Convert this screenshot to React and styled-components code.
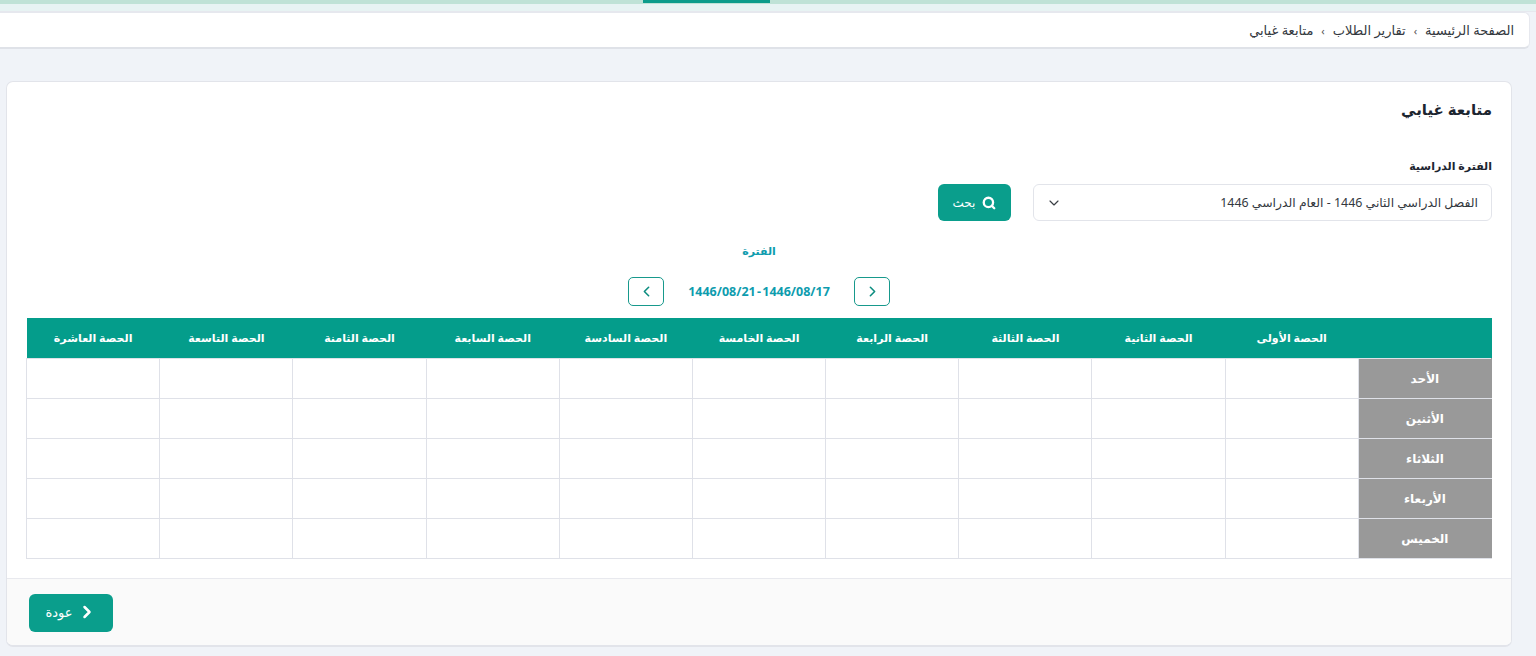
import React from "react";
import styled, { createGlobalStyle } from "styled-components";
import { ChevronDown, ChevronLeft, ChevronRight, Search } from "lucide-react";

const periods = [
  "الحصة الأولى",
  "الحصة الثانية",
  "الحصة الثالثة",
  "الحصة الرابعة",
  "الحصة الخامسة",
  "الحصة السادسة",
  "الحصة السابعة",
  "الحصة الثامنة",
  "الحصة التاسعة",
  "الحصة العاشرة",
];

const days = ["الأحد", "الأثنين", "الثلاثاء", "الأربعاء", "الخميس"];

const crumbs = ["الصفحة الرئيسية", "تقارير الطلاب", "متابعة غيابي"];

const App = () => {
  return (
    <>
      <GlobalStyle />
      <Page dir="rtl">
        <TopBar>
          <ActiveTab />
        </TopBar>
        <Breadcrumb>
          {crumbs.map((crumb, i) => (
            <React.Fragment key={crumb}>
              {i > 0 && <CrumbSep>›</CrumbSep>}
              <span>{crumb}</span>
            </React.Fragment>
          ))}
        </Breadcrumb>
        <Card>
          <CardBody>
            <Title>متابعة غيابي</Title>
            <FieldLabel>الفترة الدراسية</FieldLabel>
            <SearchRow>
              <Select>
                <span>الفصل الدراسي الثاني 1446 - العام الدراسي 1446</span>
                <ChevronDown size={16} strokeWidth={1.75} color="#3a3f45" />
              </Select>
              <SearchButton type="button">
                <Search size={14} strokeWidth={4} />
                بحث
              </SearchButton>
            </SearchRow>
            <PeriodTitle>الفترة</PeriodTitle>
            <Pager>
              <PagerButton type="button">
                <ChevronRight size={17} strokeWidth={2.25} />
              </PagerButton>
              <DateRange>1446/08/17 - 1446/08/21</DateRange>
              <PagerButton type="button">
                <ChevronLeft size={17} strokeWidth={2.25} />
              </PagerButton>
            </Pager>
            <Schedule>
              <thead>
                <tr>
                  <HeadCell />
                  {periods.map((p) => (
                    <HeadCell key={p}>{p}</HeadCell>
                  ))}
                </tr>
              </thead>
              <tbody>
                {days.map((day) => (
                  <tr key={day}>
                    <DayCell>{day}</DayCell>
                    {periods.map((p) => (
                      <Cell key={p} />
                    ))}
                  </tr>
                ))}
              </tbody>
            </Schedule>
          </CardBody>
          <CardFooter>
            <BackButton type="button">
              <ChevronRight size={20} strokeWidth={3} />
              عودة
            </BackButton>
          </CardFooter>
        </Card>
      </Page>
    </>
  );
};

const GlobalStyle = createGlobalStyle`
  html, body {
    margin: 0;
    padding: 0;
    background: #f0f3f8;
    overflow: hidden;
  }
  * {
    box-sizing: border-box;
  }
  body {
    font-family: "Noto Sans", "DejaVu Sans", sans-serif;
    color: #212830;
  }
`;

const Page = styled.div`
  width: 1536px;
  height: 656px;
  overflow: hidden;
  background: #f0f3f8;
`;

const TopBar = styled.div`
  height: 12px;
  background: linear-gradient(#bfe2d6 0 4px, #e7f3f3 4px 11px, #e6e8ee 11px);
`;

const ActiveTab = styled.div`
  width: 127px;
  height: 3px;
  background: #0d9c8b;
  margin-right: 766px;
`;

const Breadcrumb = styled.nav`
  height: 37px;
  margin: 0 6px 0 -10px;
  padding: 0 15px;
  display: flex;
  align-items: center;
  gap: 8px;
  background: #fff;
  border: 1px solid #e6e8ee;
  border-bottom: 2px solid #dfe2e8;
  border-radius: 6px;
  font-size: 13px;
  color: #33383e;
`;

const CrumbSep = styled.span`
  font-size: 11px;
  color: #555;
`;

const Card = styled.main`
  width: 1506px;
  height: 566px;
  margin: 32px 24px 0 0;
  display: flex;
  flex-direction: column;
  background: #fff;
  border: 1px solid #e2e4ea;
  border-bottom-width: 2px;
  border-radius: 7px;
  overflow: hidden;
`;

const CardBody = styled.div`
  flex: 1;
  padding: 0 19px;
`;

const Title = styled.h1`
  margin: 15px 0 0;
  height: 24px;
  line-height: 24px;
  font-size: 15px;
  font-weight: 700;
  color: #1c2530;
`;

const FieldLabel = styled.div`
  margin-top: 35px;
  height: 20px;
  line-height: 20px;
  font-size: 11px;
  font-weight: 700;
  color: #1c2530;
`;

const SearchRow = styled.div`
  display: flex;
  gap: 22px;
  margin-top: 8px;
`;

const Select = styled.div`
  width: 459px;
  height: 37px;
  padding: 0 13px 0 12px;
  display: flex;
  align-items: center;
  justify-content: space-between;
  background: #fff;
  border: 1px solid #e2e4ea;
  border-radius: 6px;
  font-size: 12.4px;
  color: #33383e;
`;

const SearchButton = styled.button`
  width: 73px;
  height: 37px;
  display: flex;
  align-items: center;
  justify-content: center;
  gap: 7px;
  padding: 0;
  border: none;
  border-radius: 6px;
  background: #0a9e8c;
  color: #fff;
  font: inherit;
  font-size: 12px;
`;

const PeriodTitle = styled.div`
  margin-top: 20px;
  height: 20px;
  line-height: 20px;
  text-align: center;
  font-size: 11px;
  font-weight: 700;
  color: #0e9cae;
`;

const Pager = styled.div`
  display: flex;
  justify-content: center;
  align-items: center;
  gap: 22px;
  margin-top: 16px;
`;

const PagerButton = styled.button`
  width: 36px;
  height: 29px;
  display: flex;
  align-items: center;
  justify-content: center;
  padding: 0;
  background: #fff;
  border: 1px solid #17998c;
  border-radius: 5px;
  color: #0d8d80;
`;

const DateRange = styled.div`
  width: 146px;
  text-align: center;
  white-space: nowrap;
  font-size: 12.5px;
  font-weight: 700;
  word-spacing: -2px;
  color: #0e9cae;
`;

const Schedule = styled.table`
  width: 1466px;
  margin-top: 12px;
  border-collapse: collapse;
  table-layout: fixed;
`;

const HeadCell = styled.th`
  height: 40px;
  padding: 0;
  background: #049d8b;
  color: #fff;
  font-size: 11px;
  font-weight: 700;
`;

const DayCell = styled.td`
  height: 40px;
  padding: 0;
  background: #999;
  border: 1px solid #dfe1e8;
  border-right-color: #999;
  color: #fff;
  text-align: center;
  font-size: 12px;
  font-weight: 700;
`;

const Cell = styled.td`
  height: 40px;
  padding: 0;
  background: #fff;
  border: 1px solid #dfe1e8;
`;

const CardFooter = styled.footer`
  height: 67px;
  flex-shrink: 0;
  padding: 15px 22px 0;
  display: flex;
  justify-content: flex-end;
  background: #fafafa;
  border-top: 1px solid #e8e9ee;
`;

const BackButton = styled.button`
  width: 84px;
  height: 38px;
  display: flex;
  align-items: center;
  justify-content: center;
  gap: 4px;
  padding: 0 0 3px;
  border: none;
  border-radius: 6px;
  background: #0a9e8c;
  color: #fff;
  font: inherit;
  font-size: 13px;
`;

export default App;
